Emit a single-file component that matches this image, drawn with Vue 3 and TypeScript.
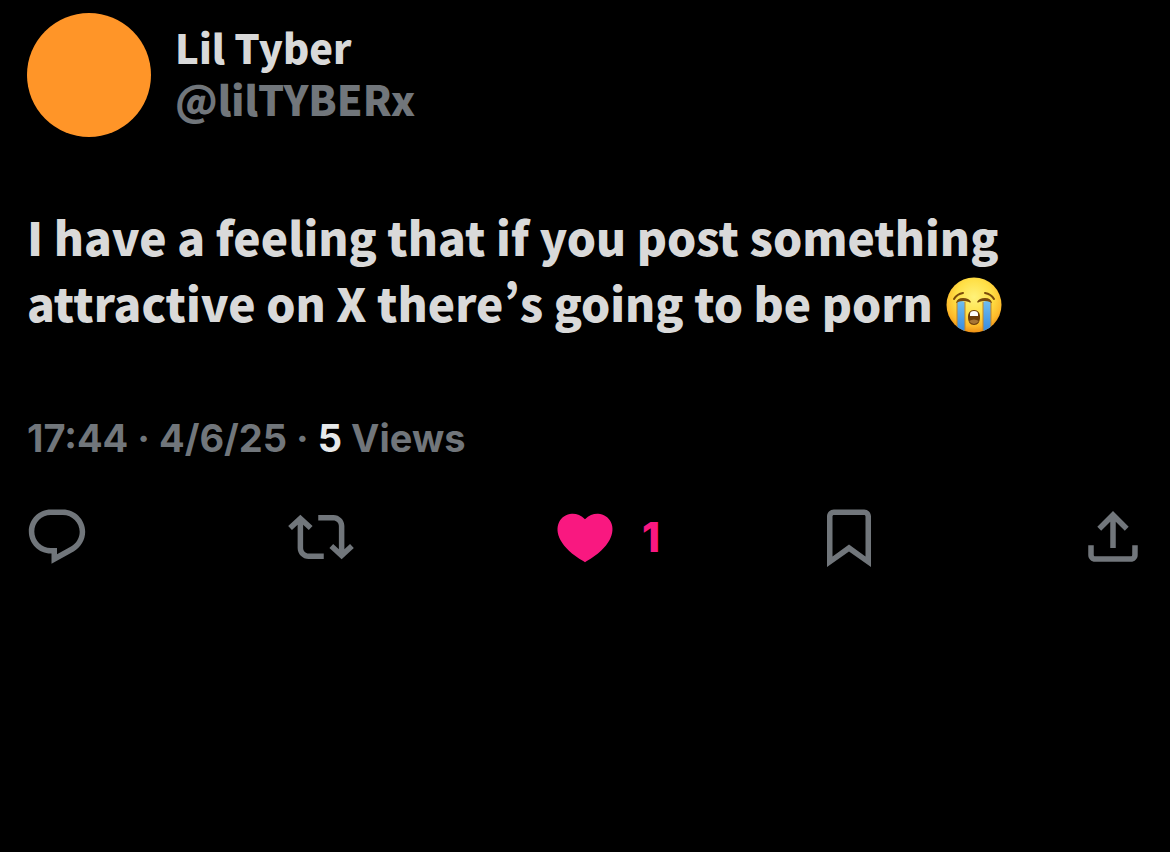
<script setup lang="ts">
import { ref } from 'vue'

interface Action {
  id: string
  label: string
  path: string
  count?: number
}

const author = { name: 'Lil Tyber', handle: '@lilTYBERx' }
const liked = ref(true)

const actions: Action[] = [
  {
    id: 'reply',
    label: 'Reply',
    path: 'M1.751 10c0-4.42 3.584-8 8.005-8h4.366c4.49 0 8.129 3.64 8.129 8.13 0 2.96-1.607 5.68-4.196 7.11l-8.054 4.46v-3.69h-.067c-4.49.1-8.183-3.51-8.183-8.01zm8.005-6c-3.317 0-6.005 2.69-6.005 6 0 3.37 2.77 6.08 6.138 6.01l.351-.01h1.761v2.3l5.087-2.81c1.951-1.08 3.163-3.13 3.163-5.36 0-3.39-2.744-6.13-6.129-6.13H9.756z',
  },
  {
    id: 'repost',
    label: 'Repost',
    path: 'M4.5 3.88l4.432 4.14-1.364 1.46L5.5 7.55V16c0 1.1.896 2 2 2H13v2H7.5c-2.209 0-4-1.79-4-4V7.55L1.432 9.48.068 8.02 4.5 3.88zM16.5 6H11V4h5.5c2.209 0 4 1.79 4 4v8.45l2.068-1.93 1.364 1.46-4.432 4.14-4.432-4.14 1.364-1.46 2.068 1.93V8c0-1.1-.896-2-2-2z',
  },
  {
    id: 'like',
    label: 'Like',
    count: 1,
    path: 'M20.884 13.19c-1.351 2.48-4.001 5.12-8.379 7.67l-.503.3-.504-.3c-4.379-2.55-7.029-5.19-8.382-7.67-1.36-2.5-1.41-4.86-.514-6.67.887-1.79 2.647-2.91 4.601-3.01 1.651-.09 3.368.56 4.798 2.01 1.429-1.45 3.146-2.1 4.796-2.01 1.954.1 3.714 1.22 4.601 3.01.896 1.81.846 4.17-.514 6.67z',
  },
  {
    id: 'bookmark',
    label: 'Bookmark',
    path: 'M4 4.5C4 3.12 5.119 2 6.5 2h11C18.881 2 20 3.12 20 4.5v18.44l-8-5.71-8 5.71V4.5zM6.5 4c-.276 0-.5.22-.5.5v14.56l6-4.29 6 4.29V4.5c0-.28-.224-.5-.5-.5h-11z',
  },
  {
    id: 'share',
    label: 'Share',
    path: 'M12 2.59l5.7 5.7-1.41 1.42L13 6.41V16h-2V6.41l-3.3 3.3-1.41-1.42L12 2.59zM21 15l-.02 3.51c0 1.38-1.12 2.49-2.5 2.49H5.5C4.11 21 3 19.88 3 18.5V15h2v3.5c0 .28.22.5.5.5h12.98c.28 0 .5-.22.5-.5L19 15h2z',
  },
]

function press(id: string) {
  if (id === 'like') liked.value = !liked.value
}
</script>

<template>
  <article class="post">
    <header class="author">
      <span class="avatar" aria-hidden="true"></span>
      <div class="names">
        <span class="name">{{ author.name }}</span>
        <span class="handle">{{ author.handle }}</span>
      </div>
    </header>

    <p class="body">
      I have a feeling that if you post something attractive on X there’s going to be porn
      <svg class="emoji" viewBox="0 0 56 56" role="img" aria-label="Loudly crying face">
        <defs>
          <radialGradient id="face" cx="0.5" cy="0.36" r="0.66">
            <stop offset="0" stop-color="#fff27a" />
            <stop offset="0.5" stop-color="#ffdf45" />
            <stop offset="0.8" stop-color="#fdb92a" />
            <stop offset="1" stop-color="#ea8812" />
          </radialGradient>
          <linearGradient id="tear" x1="0" y1="0" x2="0" y2="1">
            <stop offset="0" stop-color="#70bdf0" />
            <stop offset="1" stop-color="#3488dc" />
          </linearGradient>
          <clipPath id="disc"><circle cx="28" cy="28" r="27.5" /></clipPath>
        </defs>
        <circle cx="28" cy="28" r="27.5" fill="url(#face)" />
        <g clip-path="url(#disc)">
          <path d="M11 25q4-2 8 0v31h-8zM37 25q4-2 8 0v31h-8z" fill="url(#tear)" />
          <path d="M11 25v31M19 25v31M37 25v31M45 25v31" stroke="#c78724" stroke-width="1" fill="none" />
        </g>
        <g fill="none" stroke="#7a4a0b" stroke-linecap="round">
          <path d="M8 22q3-5 9-6M39 16q6 1 9 6" stroke-width="2" />
        </g>
        <path d="M10 26q1-5 7-5 6 0 8 4-1 1-2 0-6-2-11 0-1 1-2 1zM31 25q2-4 8-4 6 0 7 5-1 0-2-1-5-2-11 0-1 1-2 0z" fill="#7a4a0b" />
        <path d="M28 33c4 0 6 3 6 7 0 5-2 8-6 8s-6-3-6-8c0-4 2-7 6-7z" fill="#6b3c0a" />
        <path d="M24 37q0-3 4-3t4 3v2h-8z" fill="#fff" />
        <path d="M23 44q5-3 10 0-2 3-5 3t-5-3z" fill="#a87535" />
      </svg>
    </p>

    <p class="meta">
      <time datetime="2025-06-04T17:44">17:44 · 4/6/25</time> · <strong>5</strong> Views
    </p>

    <div class="actions" role="group" aria-label="Post actions">
      <button
        v-for="action in actions"
        :key="action.id"
        type="button"
        class="action"
        :class="{ liked: action.id === 'like' && liked }"
        :aria-label="action.label"
        @click="press(action.id)"
      >
        <svg class="icon" viewBox="0 0 24 24" aria-hidden="true"><path :d="action.path" /></svg>
        <span v-if="action.count" class="count">{{ action.count }}</span>
      </button>
    </div>
  </article>
</template>

<style>
body {
  margin: 0;
  background: #000;
}
</style>

<style scoped>
.post {
  box-sizing: border-box;
  min-height: 100vh;
  padding: 13px 24px 24px;
  background: #000;
  color: #d9d9d9;
  font-family: "Noto Sans CJK SC", "Noto Sans", sans-serif;
  font-weight: 900;
  font-variant-east-asian: proportional-width;
}

.author {
  display: flex;
  align-items: flex-start;
  gap: 24px;
  padding-left: 3px;
}

.avatar {
  flex: none;
  width: 124px;
  height: 124px;
  border-radius: 50%;
  background: #ff9528;
}

.names {
  display: grid;
  gap: 8px;
  padding-top: 13px;
  line-height: 43px;
}

.name {
  font-size: 40px;
}

.handle {
  color: #71767b;
  font-size: 41px;
}

.body {
  margin: 66px 3px 0;
  font-size: 46px;
  line-height: 66px;
}

.emoji {
  width: 56px;
  height: 56px;
  margin-left: 3px;
  vertical-align: -11px;
}

.meta {
  margin: 70px 3px 0;
  color: #71767b;
  font-family: Inter, "Noto Sans", sans-serif;
  font-size: 38px;
  font-weight: 700;
  line-height: 66px;
}

.meta strong {
  color: #e7e9ea;
  font-weight: 700;
}

.actions {
  display: flex;
  justify-content: space-between;
  margin-top: 33px;
}

.action {
  display: flex;
  align-items: center;
  gap: 24px;
  width: 66px;
  height: 66px;
  padding: 0;
  border: 0;
  background: none;
  color: #71767b;
  font-family: Inter, "Noto Sans", sans-serif;
  font-size: 41px;
  font-weight: 800;
  line-height: 66px;
  cursor: pointer;
}

.icon {
  flex: none;
  width: 66px;
  height: 66px;
  fill: currentColor;
}

.liked {
  color: #f91880;
}
</style>
